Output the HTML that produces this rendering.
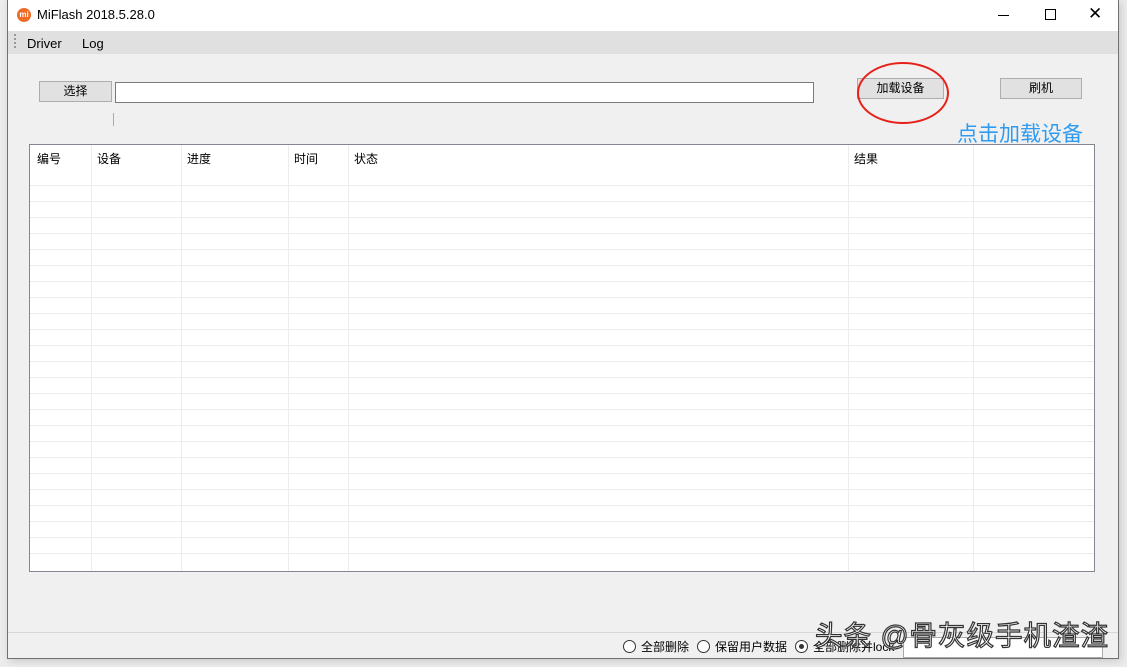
<!DOCTYPE html><html><head><style>
body{margin:0;width:1127px;height:667px;background:#ececec;position:relative;overflow:hidden;font-family:"Liberation Sans","Noto Sans CJK SC",sans-serif;font-size:12px;color:#000}
.a{position:absolute}
.btn{position:absolute;background:#e1e1e1;border:1px solid #adadad;text-align:center;box-sizing:border-box;font-size:12px}
.c{position:absolute;top:0;width:1px;height:428px;background:#ececec}
</style></head><body>
<div class="a" style="left:7px;top:0;width:1112px;height:659px;border:1px solid #707070;border-top:none;box-sizing:border-box;background:#f0f0f0;box-shadow:2px 2px 8px rgba(0,0,0,.15)"></div>
<div class="a" style="left:8px;top:0;width:1110px;height:31px;background:#fff"></div>
<div class="a" style="left:17px;top:8px;width:14px;height:14px;border-radius:50%;background:#f06a27;color:#fff;font-size:8px;line-height:14px;text-align:center;font-weight:bold">mi</div>
<div class="a" style="left:37px;top:7px;font-size:13px">MiFlash 2018.5.28.0</div>
<div class="a" style="left:998px;top:15px;width:11px;height:1px;background:#000"></div>
<div class="a" style="left:1045px;top:9px;width:9px;height:9px;border:1px solid #000"></div>
<div class="a" style="left:1088px;top:4px;font-size:17px">✕</div>
<div class="a" style="left:8px;top:31px;width:1110px;height:23px;background:#e0e0e0"></div>
<div class="a" style="left:14px;top:34px;width:2px;height:14px;border-left:2px dotted #999"></div>
<div class="a" style="left:27px;top:36px;font-size:13px">Driver</div>
<div class="a" style="left:82px;top:36px;font-size:13px">Log</div>
<div class="btn" style="left:39px;top:81px;width:73px;height:21px;line-height:19px">选择</div>
<div class="a" style="left:115px;top:82px;width:699px;height:21px;background:#fff;border:1px solid #7a7a7a;box-sizing:border-box"></div>
<div class="a" style="left:113px;top:113px;width:1px;height:13px;background:#aaa"></div>
<div class="btn" style="left:857px;top:78px;width:87px;height:21px;line-height:19px">加载设备</div>
<div class="btn" style="left:1000px;top:78px;width:82px;height:21px;line-height:19px">刷机</div>
<div class="a" style="left:857px;top:62px;width:92px;height:62px;border:2px solid #e8201a;border-radius:50%;box-sizing:border-box"></div>
<div class="a" style="left:957px;top:118px;font-size:21px;color:#2f9bf0">点击加载设备</div>
<div class="a" style="left:29px;top:144px;width:1066px;height:428px;background:#fff;border:1px solid #828790;box-sizing:border-box;overflow:hidden">
<div class="a" style="left:0;top:40px;width:1066px;height:384px;background:repeating-linear-gradient(#ececec 0,#ececec 1px,#fff 1px,#fff 16px)"></div>
<div class="c" style="left:61px"></div><div class="c" style="left:151px"></div><div class="c" style="left:258px"></div><div class="c" style="left:318px"></div><div class="c" style="left:818px"></div><div class="c" style="left:943px"></div>
<div class="a" style="left:7px;top:5px">编号</div>
<div class="a" style="left:67px;top:5px">设备</div>
<div class="a" style="left:157px;top:5px">进度</div>
<div class="a" style="left:264px;top:5px">时间</div>
<div class="a" style="left:324px;top:5px">状态</div>
<div class="a" style="left:824px;top:5px">结果</div>
</div>
<div class="a" style="left:8px;top:632px;width:1110px;height:1px;background:#d7d7d7"></div>
<div class="a" style="left:623px;top:640px;width:11px;height:11px;border:1px solid #333;border-radius:50%;background:#fff"></div>
<div class="a" style="left:641px;top:638px;font-size:12px">全部删除</div>
<div class="a" style="left:697px;top:640px;width:11px;height:11px;border:1px solid #333;border-radius:50%;background:#fff"></div>
<div class="a" style="left:715px;top:638px">保留用户数据</div>
<div class="a" style="left:795px;top:640px;width:11px;height:11px;border:1px solid #333;border-radius:50%;background:#fff"></div>
<div class="a" style="left:799px;top:644px;width:5px;height:5px;border-radius:50%;background:#333"></div>
<div class="a" style="left:813px;top:638px">全部删除并lock</div>
<div class="a" style="left:903px;top:637px;width:198px;height:19px;background:#fff;border:1px solid #aaa"></div>
<div class="a" style="left:815px;top:613px;font-size:27.5px;color:#fff;-webkit-text-stroke:1.2px #333;letter-spacing:1px">头条 @骨灰级手机渣渣</div>
</body></html>
